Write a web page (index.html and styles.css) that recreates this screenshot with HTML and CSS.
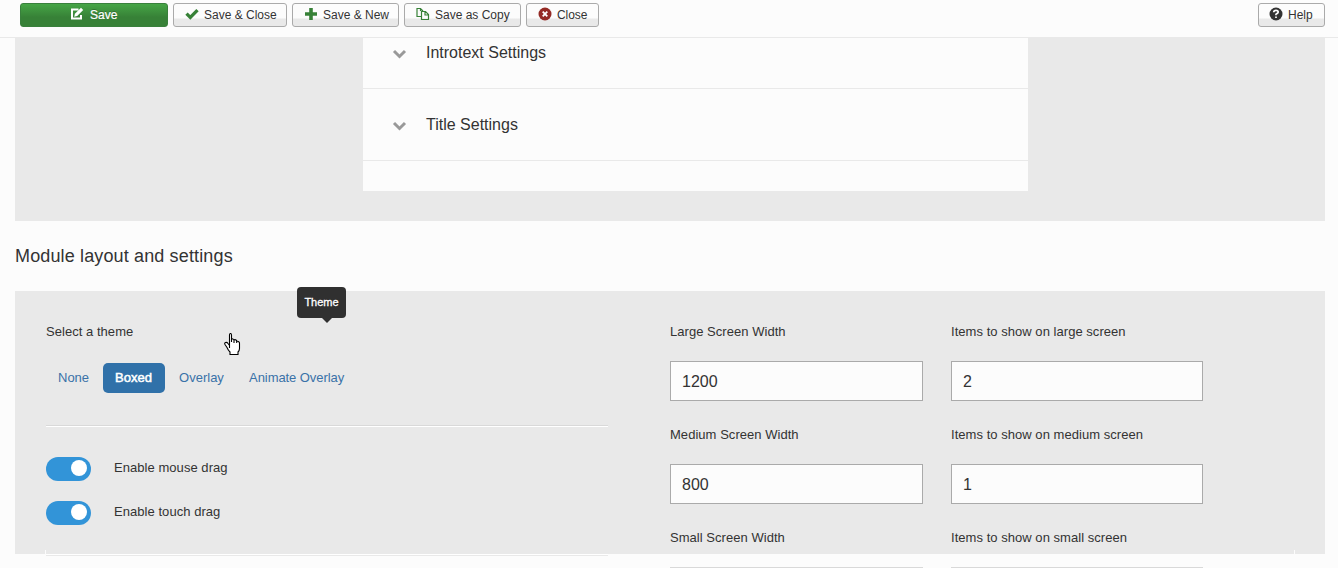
FILE: index.html
```html
<!DOCTYPE html>
<html lang="en">
<head>
<meta charset="utf-8">
<title>Module settings</title>
<link rel="stylesheet" href="styles.css">
</head>
<body>
<header class="toolbar">
  <button class="btn save"><svg class="icon" viewBox="0 0 14 14"><path d="M8.5 2.500H2v9h9V8" fill="none" stroke="currentColor" stroke-width="2"/><path d="M4.200 9.800l.7-3.100L11 .8 13.200 3 7.200 9z" fill="currentColor"/></svg><span>Save</span></button>
  <button class="btn save-close"><svg class="icon green" viewBox="0 0 14 14"><path d="M1.500 6.700l3.800 3.800 7.200-7.300" fill="none" stroke="currentColor" stroke-width="3.300"/></svg><span>Save &amp; Close</span></button>
  <button class="btn save-new"><svg class="icon green" viewBox="0 0 14 14"><path d="M7 1v12M1 7h12" stroke="currentColor" stroke-width="3.600"/></svg><span>Save &amp; New</span></button>
  <button class="btn save-copy"><svg class="icon green" viewBox="0 0 14 14"><path d="M5 9.500H1v-8h3.500l2.500 2.500M4.500 1.500v2.500M5.500 4.500h4l3 3v5h-7zM9 4.500v3.500h3.500" fill="none" stroke="currentColor" stroke-width="1.200"/></svg><span>Save as Copy</span></button>
  <button class="btn close"><svg class="icon red" viewBox="0 0 14 14"><circle cx="7" cy="7" r="6.500" fill="currentColor"/><path d="M4.700 4.700l4.600 4.600M9.300 4.700L4.700 9.300" stroke="#fff" stroke-width="1.800"/></svg><span>Close</span></button>
  <button class="btn help"><svg class="icon" viewBox="0 0 14 14"><circle cx="7" cy="7" r="6.500" fill="currentColor"/><path d="M4.700 5.300Q4.800 3.300 7 3.300T9.200 5.200Q9.100 6.300 7 7.200V8.300M7 9.400v1.700" fill="none" stroke="#fff" stroke-width="1.700"/></svg><span>Help</span></button>
</header>
<main>
  <section class="panel upper">
    <div class="accordion">
      <div class="row first"><svg class="chevron" viewBox="0 0 14 10"><path d="M1.500 2L7 7.500 12.500 2" fill="none" stroke="currentColor" stroke-width="3"/></svg><span>Introtext Settings</span></div>
      <div class="row"><svg class="chevron" viewBox="0 0 14 10"><path d="M1.500 2L7 7.500 12.500 2" fill="none" stroke="currentColor" stroke-width="3"/></svg><span>Title Settings</span></div>
    </div>
  </section>
  <h2>Module layout and settings</h2>
  <section class="panel lower">
    <div class="options">
      <label>Select a theme</label>
      <nav class="pills"><a>None</a><a class="active">Boxed</a><a class="overlay">Overlay</a><a class="animate">Animate Overlay</a></nav>
      <hr>
      <div class="setting"><span class="switch"><i></i></span><span>Enable mouse drag</span></div>
      <div class="setting"><span class="switch"><i></i></span><span>Enable touch drag</span></div>
      <hr class="last">
    </div>
    <div class="fields">
      <div class="field"><label>Large Screen Width</label><input value="1200"></div>
      <div class="field"><label>Items to show on large screen</label><input value="2"></div>
      <div class="field"><label>Medium Screen Width</label><input value="800"></div>
      <div class="field"><label>Items to show on medium screen</label><input value="1"></div>
      <div class="field"><label>Small Screen Width</label><div class="cut-edge"></div></div>
      <div class="field"><label>Items to show on small screen</label><div class="cut-edge"></div></div>
    </div>
    <span class="tick left"></span><span class="tick right"></span>
    <div class="tooltip">Theme</div>
    <svg class="pointer" viewBox="0 0 17 23"><path d="M5.500 15V2Q5.500.5 6.500.5T7.500 2v7V6.500q0-1 1.500-.5 1 .2 1 1.500V10 7q1-.7 2 0 .7.500.7 1.500V10 8.500q1.200-.7 2.300.5.500.5.500 1.500v5q0 2-1.500 3.500v2.500h-8V19Q4 17 3 14.500L1 11.500q-.8-1.500.5-2Q3 9 4 10.500l1.500 2" fill="#fff" stroke="#000" stroke-width="1.100"/></svg>
  </section>
</main>
</body>
</html>
```
FILE: styles.css
```css
* { box-sizing: border-box; }
body { margin: 0; width: 1338px; height: 568px; overflow: hidden; background: #fcfcfc; color: #333; font: 13px/18px "Liberation Sans", Arial, sans-serif; }
.toolbar { height: 38px; padding: 3px 13px 0 20px; border-bottom: 1px solid #e9e9e9; display: flex; gap: 5px; }
.btn { height: 24px; margin: 0; padding: 0; display: flex; align-items: center; border: 1px solid #aaa; border-radius: 3px; background: linear-gradient(#fcfcfc 14px, #e9e9e9 15px); color: #333; font: 12px/22px "Liberation Sans", Arial, sans-serif; white-space: nowrap; }
.icon { width: 14px; height: 14px; flex: none; margin: 0 5px 2px 11px; }
.save { width: 148px; border-color: #39803c; background: linear-gradient(#46a546, #378137 60%); color: #fff; -webkit-text-stroke: .2px #fff; text-shadow: 0 -1px rgba(0,0,0,.25); }
.save .icon { margin-left: 49px; margin-right: 6px; }
.save-close { width: 114px; }
.save-new { width: 107px; }
.save-copy { width: 117px; }
.close { width: 73px; letter-spacing: -.05px; }
.help { width: 67px; margin-left: auto; }
.help .icon { margin-left: 10px; }
.green { color: #378137; }
.red { color: #942a25; }
.panel { margin: 0 13px 0 15px; background: #e9e9e9; }
.upper { height: 183px; padding-left: 348px; }
.accordion { width: 665px; height: 153px; background: #fcfcfc; font-size: 16px; }
.row { height: 72px; border-bottom: 1px solid #e9e9e9; padding-left: 29px; display: flex; align-items: center; }
.row.first { height: 51px; padding-bottom: 21px; }
.chevron { width: 15px; height: 10px; color: #999; margin: 3px 19px 0 0; }
h2 { height: 70px; margin: 0; padding-left: 15px; font-weight: 400; font-size: 18px; line-height: 70px; letter-spacing: .14px; }
.lower { position: relative; height: 263px; padding: 31px 0 0 31px; display: flex; }
.options { width: 562px; }
label { display: block; height: 18px; line-height: 20px; white-space: nowrap; letter-spacing: .04px; }
.pills { height: 30px; margin-top: 23px; display: flex; color: #3a72a8; line-height: 30px; }
.pills a { padding: 0 12px; margin-right: 2px; white-space: nowrap; }
.pills .active { width: 62px; border-radius: 5px; background: #3071a9; color: #fff; -webkit-text-stroke: .5px #fff; }
.pills .overlay { width: 68px; }
.pills .animate { letter-spacing: -.07px; }
hr { margin: 32px 0 30px; border: 0; border-top: 1px solid #d9d9d9; border-bottom: 1px solid #fff; }
.last { margin: 9px 0 0; border-top-color: #fff; border-bottom-color: #e9e9e9; }
.setting { height: 44px; display: flex; gap: 23px; line-height: 22px; letter-spacing: .05px; }
.switch { width: 45px; height: 24px; padding: 3px 4px; border-radius: 12px; background: #3294d8; display: flex; justify-content: flex-end; }
.switch i { width: 16px; height: 16px; border-radius: 50%; background: #fff; }
.fields { height: 246px; margin-left: 62px; display: grid; grid-template-columns: 253px 252px; grid-template-rows: 103px 103px 40px; column-gap: 28px; }
input { display: block; width: 100%; height: 40px; margin-top: 21px; padding: 2px 11px 0; border: 1px solid #aaa; border-radius: 0; background: #fcfcfc; color: #333; font: 16px "Liberation Sans", Arial, sans-serif; }
.cut-edge { height: 1px; margin-top: 21px; background: #d9d9d9; }
.tooltip { position: absolute; left: 282px; top: -4px; width: 49px; height: 31px; border-radius: 4px; background: #303030; color: #fff; text-align: center; font-size: 11px; line-height: 30px; -webkit-text-stroke: .3px #fff; }
.tooltip::after { content: ""; position: absolute; left: 25px; top: 31px; border: 5px solid transparent; border-top-color: #303030; border-bottom: 0; }
.pointer { position: absolute; left: 209px; top: 42px; width: 17px; height: 23px; }
.tick { position: absolute; top: 259px; width: 1px; height: 4px; background: #fcfcfc; }
.tick.left { left: 30px; }
.tick.right { left: 1279px; }
```
